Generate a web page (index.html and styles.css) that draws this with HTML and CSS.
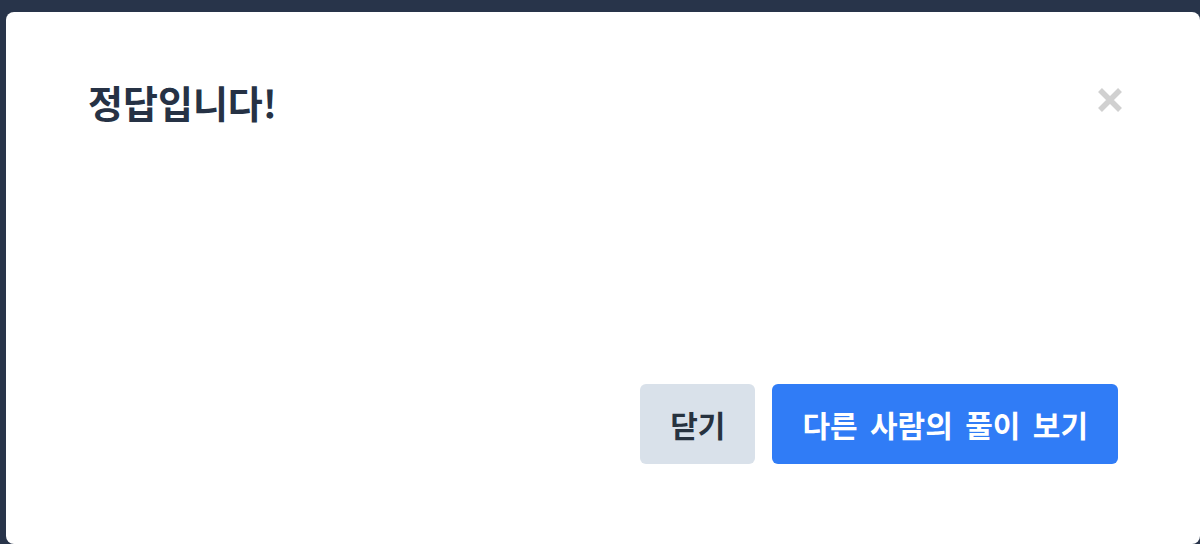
FILE: index.html
```html
<!DOCTYPE html>
<html lang="ko">
<head>
<meta charset="utf-8">
<link rel="stylesheet" href="styles.css">
</head>
<body>
<div class="modal">
  <div class="modal-header">
    <h1 class="title">정답입니다!</h1>
    <button class="close" aria-label="닫기">
      <svg width="26" height="26" viewBox="0 0 26 26"><path d="M3 3 L23 23 M23 3 L3 23" stroke="#d0d0d0" stroke-width="5.5" stroke-linecap="butt"/></svg>
    </button>
  </div>
  <div class="modal-footer">
    <button class="btn btn-gray">닫기</button>
    <button class="btn btn-blue">다른 사람의 풀이 보기</button>
  </div>
</div>
</body>
</html>
```
FILE: styles.css
```css
html, body {
  margin: 0;
  height: 100%;
}
body {
  background: #28344a;
  padding: 12px 0 0 6px;
  box-sizing: border-box;
  overflow: hidden;
  font-family: "Noto Sans CJK KR", "Noto Sans", sans-serif;
}
.modal {
  width: 1194px;
  height: 532px;
  background: #fff;
  border-radius: 8px;
  box-sizing: border-box;
  padding: 66px 82px 80px 82px;
  display: flex;
  flex-direction: column;
  justify-content: space-between;
}
.modal-header {
  display: flex;
  justify-content: space-between;
  align-items: flex-start;
}
.title {
  margin: 0;
  font-size: 38px;
  font-weight: 700;
  color: #263245;
  line-height: 48px;
}
.close {
  background: none;
  border: 0;
  padding: 0;
  margin-top: 9px;
  margin-right: -5px;
  cursor: pointer;
  line-height: 0;
}
.modal-footer {
  display: flex;
  justify-content: flex-end;
  gap: 17px;
}
.btn {
  height: 80px;
  border: 0;
  border-radius: 6px;
  padding: 0 30px;
  font-family: inherit;
  font-size: 30px;
  font-weight: 700;
}
.btn-gray {
  background: #d9e1ea;
  color: #27323f;
}
.btn-blue {
  background: #307cf6;
  color: #fff;
  word-spacing: 4px;
}
```
